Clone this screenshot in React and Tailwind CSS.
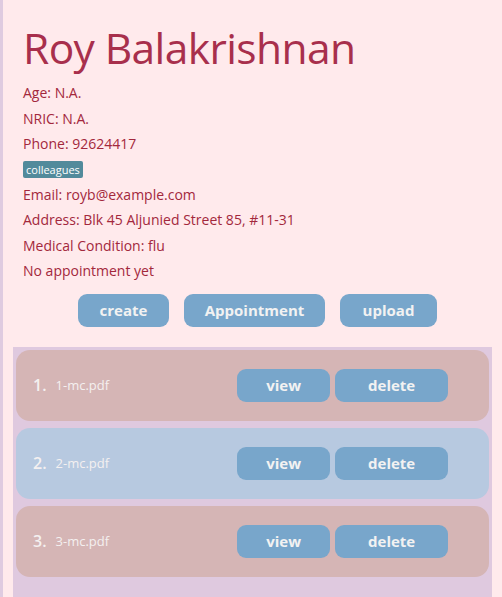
const files = [
  { id: 1, name: "1-mc.pdf", bg: "bg-[#d5b5b5]" },
  { id: 2, name: "2-mc.pdf", bg: "bg-[#b7c9e0]" },
  { id: 3, name: "3-mc.pdf", bg: "bg-[#d5b5b5]" },
];

const details = [
  "Age: N.A.",
  "NRIC: N.A.",
  "Phone: 92624417",
];

const moreDetails = [
  "Email: royb@example.com",
  "Address: Blk 45 Aljunied Street 85, #11-31",
  "Medical Condition: flu",
  "No appointment yet",
];

const btn =
  "h-[33px] rounded-[9px] bg-[#78a6cb] text-[15px] font-bold text-[#f2f2f2]";

export default function App() {
  return (
    <div
      className="min-h-[597px] bg-[#dfcbe0] pl-[3px]"
      style={{ fontFamily: "'Open Sans', 'Noto Sans', sans-serif" }}
    >
      <div className="min-h-[597px] bg-[#ffeaec] flex flex-col">
        {/* Header */}
        <div className="px-[20px] pt-[18px]">
          <h1 className="text-[42.5px] leading-[60px] font-medium text-[#a82f4c] tracking-[-0.6px]">
            Roy Balakrishnan
          </h1>
          <div className="mt-[2px] text-[14px] text-[#a3283c]">
            {details.map((d) => (
              <p key={d} className="leading-[25.5px]">{d}</p>
            ))}
            <div className="h-[25px] flex items-center">
              <span className="rounded-[2px] bg-[#528a9b] px-[3px] text-[11px] leading-[17px] text-white">
                colleagues
              </span>
            </div>
            {moreDetails.map((d) => (
              <p key={d} className="leading-[25.5px]">{d}</p>
            ))}
          </div>
        </div>

        <div className="flex justify-center gap-[15px] pl-[10px] mt-[10px]">
          <button className={`${btn} w-[91px]`}>create</button>
          <button className={`${btn} w-[141px]`}>Appointment</button>
          <button className={`${btn} w-[97px]`}>upload</button>
        </div>

        {/* Files */}
        <div className="mx-[10px] mt-[20px] flex-1 bg-[#dfc9df] pt-[3px] px-[3px] flex flex-col gap-[7px]">
          {files.map((f) => (
            <div
              key={f.id}
              className={`${f.bg} h-[71px] rounded-[14px] flex items-center pl-[17px] text-[#f4f0f0]`}
            >
              <span className="text-[16px] font-semibold mr-[9px]">{f.id}.</span>
              <span className="text-[13px] mt-[2px]">{f.name}</span>
              <div className="ml-[128px] flex gap-[5px]">
                <button className={`${btn} h-[32px] w-[93px]`}>view</button>
                <button className={`${btn} h-[32px] w-[113px]`}>delete</button>
              </div>
            </div>
          ))}
        </div>
      </div>
    </div>
  );
}
